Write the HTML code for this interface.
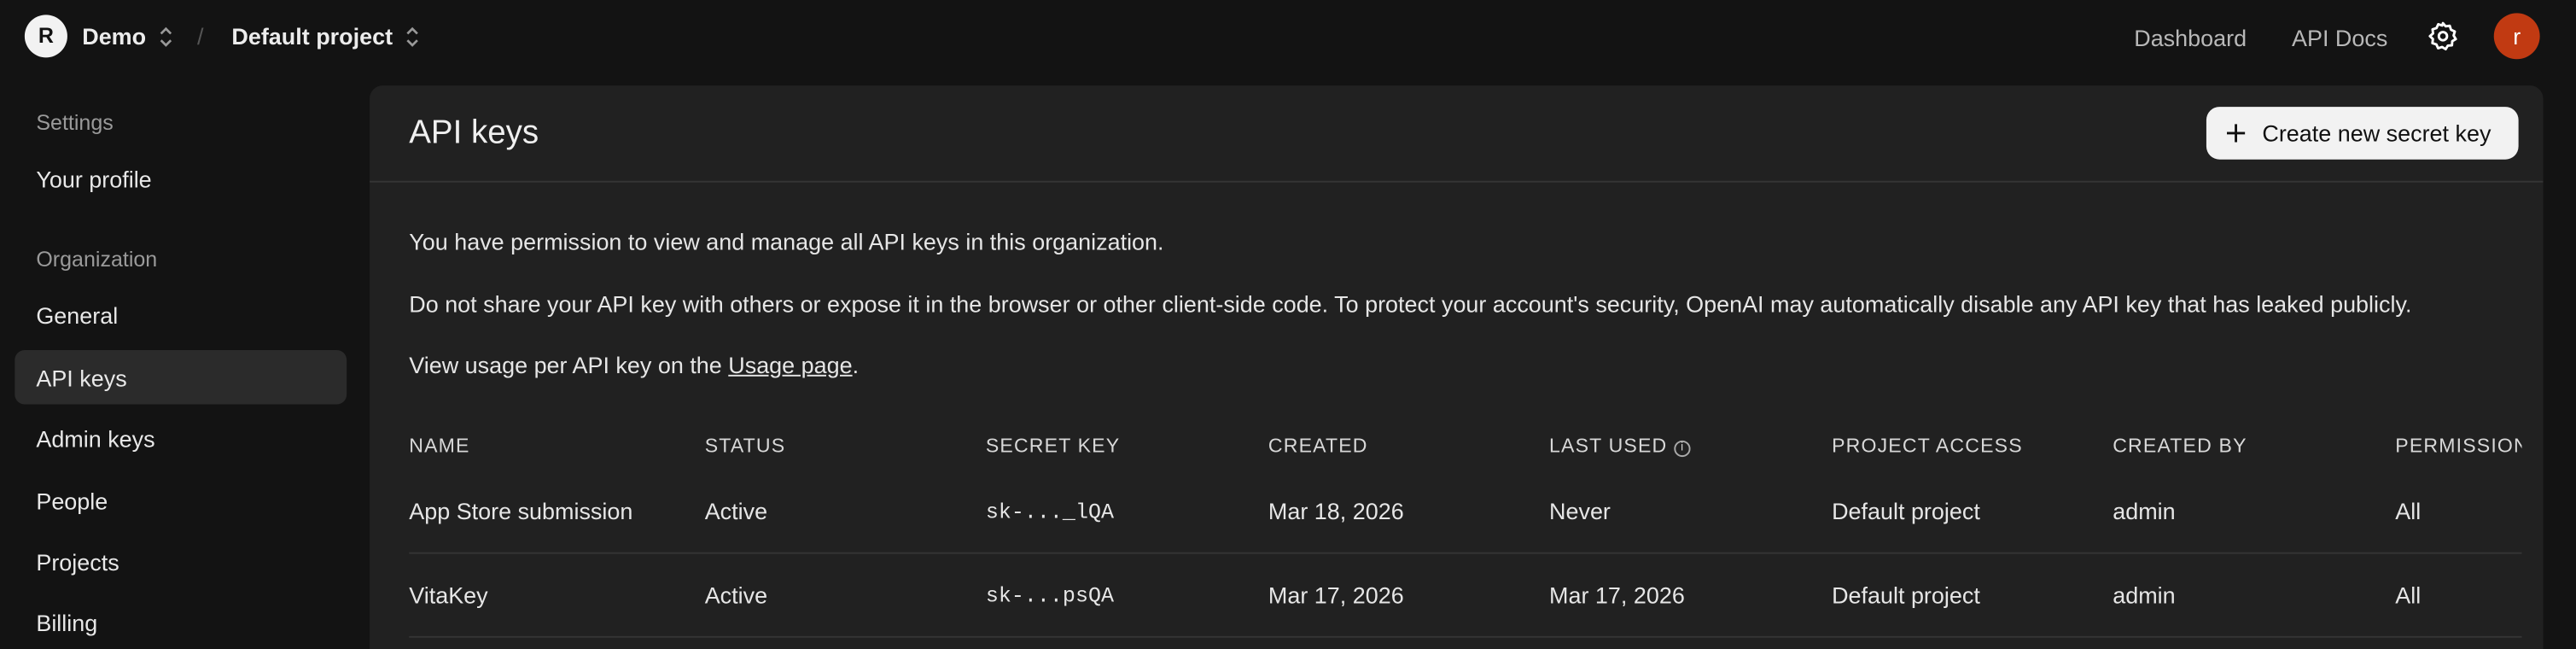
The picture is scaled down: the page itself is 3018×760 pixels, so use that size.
<!DOCTYPE html>
<html><head><meta charset="utf-8"><style>
html,body{margin:0;padding:0;background:#131313;overflow:hidden;width:3018px;height:760px}
#s{position:absolute;left:0;top:0;width:1568px;height:395px;transform:scale(1.92474);transform-origin:0 0;font-family:"Liberation Sans",sans-serif;color:#ececec;overflow:hidden}
.a{position:absolute;white-space:nowrap}
.side{font-size:14px;color:#e8e8e8}
.lab{font-size:13px;color:#9a9a9a}
.th{font-size:12px;letter-spacing:.6px;color:#d8d8d8}
.td{font-size:14px;color:#e6e6e6}
.mono{font-family:"Liberation Mono",monospace;font-size:13px}
</style></head><body><div id="s">
<div class="a" style="left:15px;top:9px;width:26px;height:26px;border-radius:50%;background:#f2f2f2;color:#111;font-size:13px;font-weight:bold;text-align:center;line-height:26px">R</div>
<div class="a" style="left:50px;top:14px;font-size:14px;font-weight:bold">Demo</div>
<svg class="a" style="left:95px;top:15px" width="12" height="15" viewBox="0 0 12 15"><path d="M3 5.5L6 2.5L9 5.5M3 9.5L6 12.5L9 9.5" fill="none" stroke="#999" stroke-width="1.4"/></svg>
<div class="a" style="left:120px;top:14px;font-size:14px;color:#555">/</div>
<div class="a" style="left:141px;top:14px;font-size:14px;font-weight:bold">Default project</div>
<svg class="a" style="left:245px;top:15px" width="12" height="15" viewBox="0 0 12 15"><path d="M3 5.5L6 2.5L9 5.5M3 9.5L6 12.5L9 9.5" fill="none" stroke="#999" stroke-width="1.4"/></svg>
<div class="a" style="left:1299px;top:15px;font-size:14px;color:#b8b8b8">Dashboard</div>
<div class="a" style="left:1395px;top:15px;font-size:14px;color:#b8b8b8">API Docs</div>
<svg class="a" style="left:1477px;top:12px" width="20" height="20" viewBox="0 0 24 24"><path d="M12 2.5l2 2.3 3-.4.9 2.9 2.8 1.3-.9 2.9 1.6 2.6-2.6 1.6-.2 3-3 .2-1.6 2.6-2.6-1.6-2.9.9-1.3-2.8-2.9-.9.4-3L2.5 12l2.3-2-.4-3 2.9-.9L8.6 3.3l2.9.9z" fill="none" stroke="#fff" stroke-width="1.8" stroke-linejoin="round"/><circle cx="12" cy="12" r="3" fill="none" stroke="#fff" stroke-width="1.8"/></svg>
<div class="a" style="left:1518px;top:8px;width:28px;height:28px;border-radius:50%;background:#c13a12;color:#fff;font-size:14px;text-align:center;line-height:28px">r</div>
<div class="a lab" style="left:22px;top:67px">Settings</div>
<div class="a side" style="left:22px;top:101px">Your profile</div>
<div class="a lab" style="left:22px;top:150px">Organization</div>
<div class="a side" style="left:22px;top:184px">General</div>
<div class="a" style="left:9px;top:213px;width:202px;height:33px;border-radius:6px;background:#2b2b2b"></div>
<div class="a side" style="left:22px;top:222px">API keys</div>
<div class="a side" style="left:22px;top:259px">Admin keys</div>
<div class="a side" style="left:22px;top:297px">People</div>
<div class="a side" style="left:22px;top:334px">Projects</div>
<div class="a side" style="left:22px;top:371px">Billing</div>
<div class="a" style="left:225px;top:52px;width:1323px;height:343px;border-radius:8px 8px 0 0;background:#212121;overflow:hidden">
 <div class="a" style="left:24px;top:18px;font-size:20px;color:#f0f0f0">API keys</div>
 <div class="a" style="left:0;top:58px;width:1323px;height:1px;background:#353535"></div>
 <div class="a" style="left:1118px;top:13px;width:190px;height:32px;border-radius:8px;background:#f2f2f2;color:#111;font-size:14px;line-height:32px">
  <svg style="position:absolute;left:12px;top:10px" width="12" height="12" viewBox="0 0 12 12"><path d="M6 0.5V11.5M0.5 6H11.5" stroke="#111" stroke-width="1.5"/></svg>
  <span style="position:absolute;left:34px">Create new secret key</span></div>
 <div class="a td" style="left:24px;top:87px">You have permission to view and manage all API keys in this organization.</div>
 <div class="a td" style="left:24px;top:125px">Do not share your API key with others or expose it in the browser or other client-side code. To protect your account's security, OpenAI may automatically disable any API key that has leaked publicly.</div>
 <div class="a td" style="left:24px;top:162px">View usage per API key on the <u>Usage page</u>.</div>
 <div class="a" style="left:0;top:0;width:1310px;height:343px;overflow:hidden">
 <div class="a th" style="left:24px;top:212px">NAME</div>
 <div class="a th" style="left:204px;top:212px">STATUS</div>
 <div class="a th" style="left:375px;top:212px">SECRET KEY</div>
 <div class="a th" style="left:547px;top:212px">CREATED</div>
 <div class="a th" style="left:718px;top:212px">LAST USED <span style="display:inline-block;width:8px;height:8px;border:1px solid #aaa;border-radius:50%;font-size:7px;line-height:8px;text-align:center;vertical-align:1px;letter-spacing:0">i</span></div>
 <div class="a th" style="left:890px;top:212px">PROJECT ACCESS</div>
 <div class="a th" style="left:1061px;top:212px">CREATED BY</div>
 <div class="a th" style="left:1233px;top:212px">PERMISSIONS</div>
 <div class="a td" style="left:24px;top:251px">App Store submission</div>
 <div class="a td" style="left:204px;top:251px">Active</div>
 <div class="a td mono" style="left:375px;top:252px">sk-..._lQA</div>
 <div class="a td" style="left:547px;top:251px">Mar 18, 2026</div>
 <div class="a td" style="left:718px;top:251px">Never</div>
 <div class="a td" style="left:890px;top:251px">Default project</div>
 <div class="a td" style="left:1061px;top:251px">admin</div>
 <div class="a td" style="left:1233px;top:251px">All</div>
 <div class="a" style="left:24px;top:284px;width:1290px;height:1px;background:#353535"></div>
 <div class="a td" style="left:24px;top:302px">VitaKey</div>
 <div class="a td" style="left:204px;top:302px">Active</div>
 <div class="a td mono" style="left:375px;top:303px">sk-...psQA</div>
 <div class="a td" style="left:547px;top:302px">Mar 17, 2026</div>
 <div class="a td" style="left:718px;top:302px">Mar 17, 2026</div>
 <div class="a td" style="left:890px;top:302px">Default project</div>
 <div class="a td" style="left:1061px;top:302px">admin</div>
 <div class="a td" style="left:1233px;top:302px">All</div>
 <div class="a" style="left:24px;top:335px;width:1290px;height:1px;background:#353535"></div>
 </div>
</div>
</div></body></html>
